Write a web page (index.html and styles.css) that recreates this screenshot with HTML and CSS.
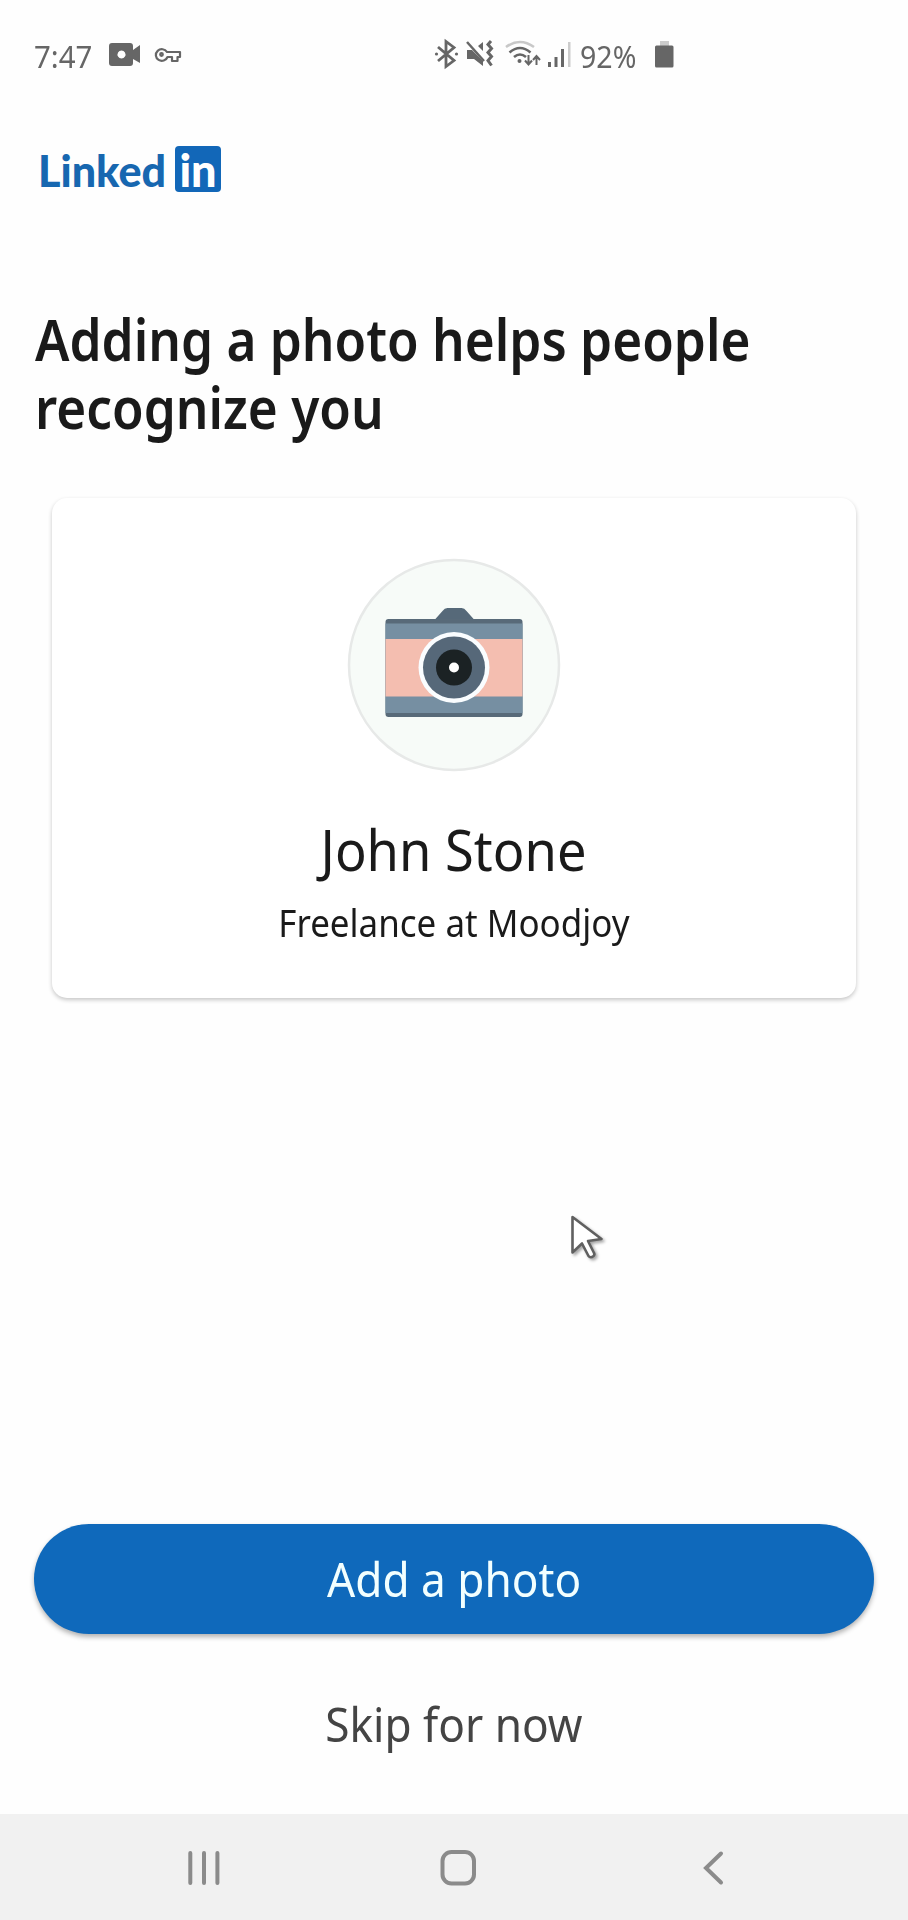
FILE: index.html
```
<!DOCTYPE html>
<html lang="en">
<head>
<meta charset="utf-8">
<title>Add a photo</title>
<link rel="stylesheet" href="styles.css">
</head>
<body>
<div class="screen">
  <header class="status">
    <span class="time"><span class="fit">7:47</span></span>
    <svg class="status-left" width="80" height="40" viewBox="105 36 80 40" fill="#666">
      <path fill-rule="evenodd" d="M112 43h18q3 0 3 3v4l7-5v18l-7-4v4q0 3-3 3h-18q-3 0-3-3V46q0-3 3-3zM121.500 50.500a4 4 0 1 0 .01 0z"/>
      <g fill="none" stroke="#666" stroke-width="2.200" stroke-linejoin="round">
        <path d="M167 52h13v5h-2.500v4h-5.500v-4h-4.500a6 5.800 0 1 1-.5-5z"/>
        <circle cx="161.500" cy="54.500" r="1.300"/>
      </g>
    </svg>
    <svg class="status-right" width="150" height="40" viewBox="430 36 150 40" fill="#666">
      <path d="M438 47l16 13.500-8 6V41.500l8 6L438 61" fill="none" stroke="#666" stroke-width="2.800"/>
      <circle cx="436.500" cy="54" r="1.600"/><circle cx="456.500" cy="54" r="1.600"/>
      <path d="M467 50h5l11 11v5l-9-7h-7zM478 46l5-4v9z"/>
      <path d="M467 42l17 19" stroke="#666" stroke-width="2.500"/>
      <path d="M491 41l-3 3.500 3.500 4-3.500 4 3.500 4-3.500 4 3.500 5" fill="none" stroke="#666" stroke-width="3"/>
      <g fill="none" stroke-width="2.600">
        <path d="M506 47q14-10 28 0" stroke="#c8c8c8"/>
        <path d="M509.500 52.500q10.500-9 21 0M514 57q6-5 12 0" stroke="#666"/>
      </g>
      <circle cx="519.500" cy="61" r="2"/>
      <path d="M528.500 55v9M525 60.500l3.500 4 3.500-4M536.500 65v-9M533 60l3.500-4 3.500 4" fill="none" stroke="#666" stroke-width="2"/>
      <path d="M548 62h3v5h-3zM554.500 57h3v10h-3zM561 49h3v18h-3z"/>
      <path d="M568 42h2.500v25H568z" fill="#ccc"/>
    </svg>
    <span class="percent"><span class="fit">92%</span></span>
    <svg class="battery" width="20" height="30" viewBox="654 40 20 30"><path d="M660 41h9v5h-9z" fill="#ccc"/><rect x="655" y="45.500" width="18.500" height="22" rx="1.500" fill="#666"/></svg>
  </header>

  <div class="logo"><span class="linked"><span class="fit">Linked</span></span><span class="in">in</span></div>

  <h1 class="title"><span class="fit">Adding a photo helps people<br>recognize you</span></h1>

  <section class="card">
    <svg class="avatar" width="214" height="214" viewBox="0 0 214 214">
      <circle cx="107" cy="107" r="105" fill="#f7fbf8" stroke="#e7e9e8" stroke-width="2.500"/>
      <path d="M87.500 62l8-9q2-3 5-3h14q3 0 5 3l8 9z" fill="#566979"/>
      <rect x="38.500" y="61" width="137" height="98" rx="3" fill="#586a79"/>
      <path d="M38.500 65.500h137V155h-137z" fill="#768fa2"/>
      <path d="M38.500 81h137v57.500h-137z" fill="#f4beb0"/>
      <circle cx="107" cy="109.500" r="35.500" fill="#fafdff"/>
      <circle cx="107" cy="109.500" r="31" fill="#566879"/>
      <circle cx="107" cy="109.500" r="18" fill="#1b2224"/>
      <circle cx="107" cy="109.500" r="5" fill="#fff"/>
    </svg>
    <div class="name"><span class="fit">John Stone</span></div>
    <div class="role"><span class="fit">Freelance at Moodjoy</span></div>
  </section>

  <div class="actions">
    <button class="primary"><span class="fit">Add a photo</span></button>
    <button class="skip"><span class="fit">Skip for now</span></button>
  </div>

  <nav class="nav">
    <svg width="568" height="106" viewBox="170 1814 568 106" fill="none" stroke="#8b8b8b" stroke-width="4" stroke-linecap="round">
      <path d="M190.300 1853v30M204 1853v30M217.400 1853v30"/>
      <rect x="442.500" y="1852" width="31.500" height="31.500" rx="9"/>
      <path d="M721 1853.500l-15 14.500 15 14.500"/>
    </svg>
  </nav>

  <svg class="cursor" width="44" height="54" viewBox="566 1210 44 54">
    <path d="M572.500 1217v35.500l9.500-9 6.500 12.500q2 2.500 5 0 1.500-1.500.5-3l-6-12 13.500-2z" fill="#fff" stroke="#606060" stroke-width="2.600" stroke-linejoin="round"/>
  </svg>
</div>
</body>
</html>
```
FILE: styles.css
```
* { box-sizing: border-box; }
body { margin: 0; background: #fefefe; }
.screen {
  position: relative;
  width: 908px;
  height: 1920px;
  display: flex;
  flex-direction: column;
  background: #fefefe;
  color: #1a1a1a;
  font-family: "Noto Sans", sans-serif;
  overflow: hidden;
}
.fit { display: inline-block; white-space: nowrap; transform: scaleX(var(--sx, 1)); transform-origin: center; }
.status {
  height: 112px;
  padding: 36px 0 0 34px;
  display: flex;
  align-items: flex-start;
  color: #666;
  font-size: 31px;
  line-height: 40px;
}
.time { width: 71px; --sx: .95; }
.time .fit, .percent .fit, .linked .fit, .title .fit { transform-origin: left; }
.status-right { margin-left: 245px; }
.percent { width: 71px; --sx: .92; }
.battery { margin: 4px 0 0 3px; }

.logo {
  height: 80px;
  padding: 33.500px 0 0 38px;
  display: flex;
  font-family: Lato, sans-serif;
  font-weight: 900;
  font-size: 43px;
  line-height: 50px;
  color: #1767b0;
}
.linked { width: 137px; }
.in {
  width: 46px;
  height: 46.500px;
  border-radius: 4px;
  background: #1267b8;
  color: #fff;
  font-size: 45px;
  line-height: 49px;
  text-align: center;
}
.title { margin: 113px 0 0 35px; font-size: 57px; line-height: 68px; font-weight: 600; --sx: .9; }
.card {
  width: 804px;
  height: 500px;
  margin: 57px 0 0 52px;
  padding-top: 60px;
  display: flex;
  flex-direction: column;
  align-items: center;
  border-radius: 15px;
  background: #fff;
  box-shadow: 0 2px 4px rgba(0, 0, 0, .22);
}
.name { margin-top: 37px; font-size: 57px; line-height: 80px; --sx: .92; }
.role { margin-top: 7px; font-size: 38px; line-height: 52px; --sx: .92; }
.actions { margin: auto 34px 35px; display: flex; flex-direction: column; gap: 35px; }
button { border: 0; padding: 0; font: 400 48px/110px "Noto Sans", sans-serif; height: 110px; --sx: .92; }
.primary { border-radius: 55px; background: #0f69bb; color: #f2ffff; box-shadow: 0 3px 5px rgba(0, 0, 0, .3); }
.skip { background: transparent; color: #444; }
.nav { height: 106px; flex: none; background: #f1f1f1; display: flex; justify-content: center; }
.cursor { position: absolute; left: 566px; top: 1210px; filter: drop-shadow(2px 2px 1.500px rgba(0, 0, 0, .35)); }
```
